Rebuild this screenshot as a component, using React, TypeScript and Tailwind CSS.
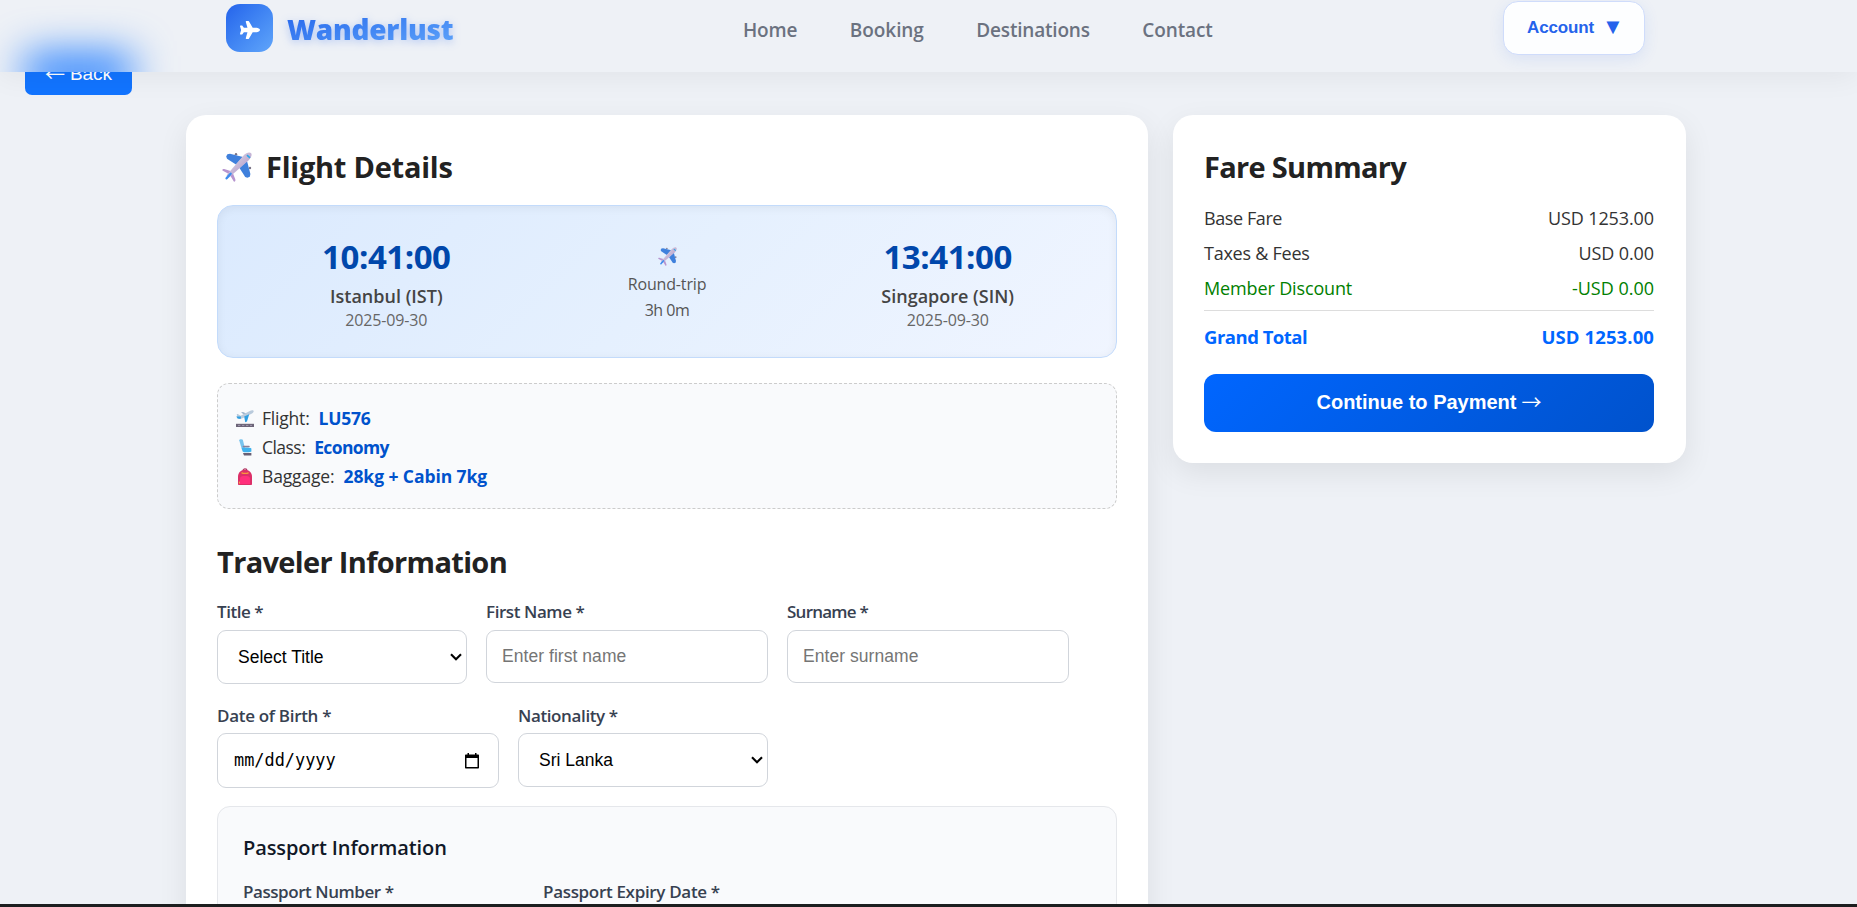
import type { ReactNode } from "react";
import { FaPlane } from "react-icons/fa";

function Airplane({ className }: { className: string }) {
  return (
    <svg viewBox="0 0 30 30" className={className} aria-hidden="true">
      <defs>
        <linearGradient id="fuselage" x1="0" y1="0" x2="1" y2="1">
          <stop offset="0.35" stopColor="#d0c5dc" />
          <stop offset="0.7" stopColor="#b9a3cf" />
        </linearGradient>
      </defs>
      <circle cx="14" cy="2.2" r="1.2" fill="#7a7386" />
      <circle cx="28" cy="16" r="1.2" fill="#7a7386" />
      <path d="M4.2 4.6 5.4 2.2 8 1.8 21 5 14 12.5 5 6.8Z" fill="#3f80dc" />
      <path d="M25.4 25.8 27.8 24.8 28.4 22 25 9 17.5 16 23.2 25Z" fill="#3f80dc" />
      <path d="M.4 18.4C.2 17 1.6 16.7 3 17.2L8.5 19 11 21.5 13.3 27.2C13.7 28.8 13.2 29.8 11.8 29.6L8.8 24.5 5.5 21.2Z" fill="#b795cf" />
      <path d="M5.2 22.5 21.5 3.6C24 .8 27.4-.3 29 1.1 30.4 2.7 29.2 6 26.4 8.5L7.6 24.9C5.6 26.4 3.8 24.4 5.2 22.5Z" fill="url(#fuselage)" />
      <path d="M25 3.2 28 5.8" stroke="#27a5e8" strokeWidth="1.6" />
      <path d="M4.6 26.3 8.6 21.7" stroke="#3b8df0" strokeWidth="2.4" strokeLinecap="round" />
    </svg>
  );
}

function Takeoff() {
  return (
    <svg viewBox="0 0 18 17" className="h-[17px] w-[18px]" aria-hidden="true">
      <path d="M0 13.8H18V17H0Z" fill="#6c6478" />
      <path d="M2 15.4H16" stroke="#a79fb3" strokeWidth="0.9" strokeDasharray="2.4 1.6" />
      <path d="M5 2.2 7 2 11.5 4 9 5.6Z" fill="#9db4cc" />
      <path d="M1 5.2C.4 4 1.2 3.6 2.2 4.2L4.6 5.8 13.8 1C15.6 0 17.6.1 17.7 1.2 17.7 2.4 16.6 3.2 15 4L6.5 8.2C4.4 9.2 1.6 9 .8 7.6Z" fill="#b9cadc" />
      <path d="M.4 6.4 5 6.6 4.6 9 1.6 8.6Z" fill="#2f9fe2" />
      <path d="M8.2 6.4 13.2 4.2 11 11.6 9.2 12.2Z" fill="#2f9fe2" />
    </svg>
  );
}

function Seat() {
  return (
    <svg viewBox="0 0 18 17" className="h-[17px] w-[18px]" aria-hidden="true">
      <path d="M3.2 1.2C3 .2 6.4-.2 6.8.8L9 9.5 6.2 11.5Z" fill="#79c4ee" />
      <path d="M5.8 9.2C5.8 8.4 14.4 8.4 15.4 9.4V12.4C15.4 13.4 7 13.6 6.6 12.4Z" fill="#3fb2ee" />
      <path d="M7.4 7.4H13" stroke="#8b8199" strokeWidth="1.5" strokeLinecap="round" />
      <path d="M7 14H15.4V16.6H8Z" fill="#695f74" />
    </svg>
  );
}

function Backpack() {
  return (
    <svg viewBox="0 0 18 17" className="h-[17px] w-[18px]" aria-hidden="true">
      <path d="M7 2.6C7 .4 11 .4 11 2.6" fill="none" stroke="#b0305f" strokeWidth="1.2" />
      <path d="M2 16V8.5C2 5 4.8 1.8 9 1.8S16 5 16 8.5V16C16 16.6 15.6 17 15 17H3C2.4 17 2 16.6 2 16Z" fill="#dc2f68" />
      <path d="M4 10.5C4 8.6 6 8 9 8S14 8.6 14 10.5V16H4Z" fill="#ff2f7c" />
      <path d="M5.5 4.6 7 5.4H11.2L12.6 4.6" fill="none" stroke="#f9963b" strokeWidth="1.3" />
      <path d="M3.4 13.6V15.6" stroke="#f9b23b" strokeWidth="1" />
    </svg>
  );
}

function Chevron() {
  return (
    <svg viewBox="0 0 12 8" className="h-[8px] w-[12px] shrink-0" aria-hidden="true">
      <path d="M1 1.2 6 6.2 11 1.2" fill="none" stroke="#000" strokeWidth="2.1" />
    </svg>
  );
}

function Calendar() {
  return (
    <svg viewBox="0 0 14 16" className="h-[16px] w-[14px] shrink-0" aria-hidden="true">
      <path d="M2.5 0H4V1.5H10V0H11.5V1.5H13C13.6 1.5 14 1.9 14 2.5V14.5C14 15.1 13.6 15.5 13 15.5H1C.4 15.5 0 15.1 0 14.5V2.5C0 1.9.4 1.5 1 1.5H2.5ZM1.5 5V14H12.5V5Z" fill="#000" fillRule="evenodd" />
    </svg>
  );
}

function Field({ label, tracking, width, gap, children }: { label: string; tracking: string; width: string; gap: string; children?: ReactNode }) {
  return (
    <div className={`flex flex-col ${width} ${gap}`}>
      <label className={`text-[17px] leading-6 font-semibold whitespace-nowrap text-[#374151] ${tracking}`}>{label}</label>
      {children}
    </div>
  );
}

const box = "flex items-center rounded-[9px] border border-[#d1d5db] bg-white font-['Liberation_Sans',sans-serif] text-[17.5px]";

function Endpoint({ time, place, date }: { time: string; place: string; date: string }) {
  return (
    <div className="flex flex-1 flex-col items-center pt-px">
      <div className="text-[33px] leading-[44px] font-bold tracking-[-0.45px] text-[#0047ab]">{time}</div>
      <div className="mt-[4px] text-[18px] leading-[26px] font-semibold text-[#444]">{place}</div>
      <div className="text-[16px] leading-[22px] tracking-[-0.15px] text-[#666]">{date}</div>
    </div>
  );
}

function InfoRow({ icon, label, labelTracking, value, valueTracking }: { icon: ReactNode; label: string; labelTracking: string; value: string; valueTracking: string }) {
  return (
    <div className="flex h-[29px] items-center text-[17.5px] leading-[29px]">
      {icon}
      <span className={`ml-[8px] text-[#333] ${labelTracking}`}>{label}</span>
      <span className={`ml-[9px] font-bold text-[#0052cc] ${valueTracking}`}>{value}</span>
    </div>
  );
}

export default function App() {
  return (
    <div className="relative flex h-screen flex-col overflow-hidden bg-[#eef1f6] font-['Open_Sans',sans-serif]">
      <header className="absolute inset-x-0 top-0 z-10 h-[72px] overflow-hidden bg-[#eef1f6] shadow-[0_4px_30px_rgba(0,0,0,0.06)]">
        <div className="absolute top-[54px] left-[25px] h-[36px] w-[107px] bg-[#1274ff]/95 blur-[20px]" />
        <div className="relative flex h-[56px] items-center pr-[212px] pl-[226px]">
          <div className="flex w-[517px] items-center gap-[14px]">
            <div className="flex h-[48px] w-[47px] items-center justify-center rounded-[14px] bg-linear-to-br from-[#2563eb] to-[#60a5fa]">
              <FaPlane className="mt-[3px] h-[18px] w-[20px] text-white" />
            </div>
            <span className="bg-linear-to-br from-[#2563eb] to-[#60a5fa] bg-clip-text pt-px text-[28px] leading-[40px] font-extrabold tracking-[-0.25px] text-transparent drop-shadow-[0_2px_4px_rgba(37,99,235,0.3)]">Wanderlust</span>
          </div>
          <nav className="flex gap-[52.5px] pt-[5px] text-[19px] leading-[27px] font-semibold text-[#6b7280]">
            <a className="tracking-[-0.16px]">Home</a>
            <a className="tracking-[-0.07px]">Booking</a>
            <a className="tracking-[-0.19px]">Destinations</a>
            <a className="tracking-[-0.13px]">Contact</a>
          </nav>
          <button className="mt-[-1px] ml-auto flex h-[54px] w-[142px] items-center gap-[8px] rounded-[15px] border border-[#cfdcfb] bg-[#fdfeff] pl-[23px] font-['Liberation_Sans',sans-serif] text-[17px] font-bold text-[#2563eb] shadow-[0_4px_15px_rgba(37,99,235,0.1)]">
            <span className="tracking-[-0.15px]">Account</span>
            <span className="pb-[3px] text-[22px] leading-[21px]">▼</span>
          </button>
        </div>
      </header>

      <main className="flex min-h-0 flex-1 flex-col overflow-hidden pt-[54px]">
        <button className="ml-[25px] flex h-[41px] w-[107px] shrink-0 items-center justify-center gap-[5px] rounded-[7px] bg-[#1274ff] pb-[2px] font-['Liberation_Sans',sans-serif] text-[19px] leading-[22px] text-white">
          <span className="font-['Noto_Sans_CJK_JP',sans-serif] text-[20px] leading-[22px]">←</span>
          <span>Back</span>
        </button>

        <div className="mt-[20px] ml-[186px] grid w-[1500px] shrink-0 grid-cols-[962px_513px] items-start gap-[25px]">
          <section className="flex h-[1400px] flex-col rounded-[20px] bg-white p-[31px] shadow-[0_10px_30px_rgba(0,0,0,0.08)]">
            <h2 className="flex h-[41px] items-center gap-[14px] pl-[5px] text-[29px] leading-[41px] font-bold tracking-[-0.24px] text-[#222]">
              <Airplane className="h-[30px] w-[30px]" />
              Flight Details
            </h2>

            <div className="mt-[18px] flex h-[153px] shrink-0 items-start rounded-[16px] border border-[#c3dbfb] bg-[linear-gradient(135deg,#dbeafe,#e5f0fe_50%,#f0f5ff)] px-[28px] pt-[28px] shadow-[inset_0_2px_10px_rgba(0,0,0,0.06)]">
              <Endpoint time="10:41:00" place="Istanbul (IST)" date="2025-09-30" />
              <div className="flex flex-1 flex-col items-center pt-[13px] text-[16px] leading-[26px] text-[#555]">
                <Airplane className="mb-[5px] h-[19px] w-[19px]" />
                <span className="tracking-[-0.15px]">Round-trip</span>
                <span className="tracking-[-0.5px]">3h 0m</span>
              </div>
              <Endpoint time="13:41:00" place="Singapore (SIN)" date="2025-09-30" />
            </div>

            <div className="mt-[25px] h-[126px] shrink-0 rounded-[12px] border border-dashed border-[#ccc] bg-[#f9fafc] pt-[20px] pl-[18px]">
              <InfoRow icon={<Takeoff />} label="Flight:" labelTracking="tracking-[-0.2px]" value="LU576" valueTracking="tracking-[-0.23px]" />
              <InfoRow icon={<Seat />} label="Class:" labelTracking="tracking-[-0.54px]" value="Economy" valueTracking="tracking-[-0.64px]" />
              <InfoRow icon={<Backpack />} label="Baggage:" labelTracking="tracking-[-0.15px]" value="28kg + Cabin 7kg" valueTracking="tracking-[-0.07px]" />
            </div>

            <h2 className="mt-[32px] text-[29px] leading-[41px] font-bold tracking-[-0.66px] text-[#222]">Traveler Information</h2>

            <div className="mt-[18px] flex gap-[19px]">
              <Field label="Title *" tracking="tracking-[-0.46px]" width="w-[250px]" gap="gap-[6px]">
                <div className={`${box} h-[54px] justify-between pr-[4px] pl-[20px] text-black`}>
                  <span>Select Title</span>
                  <Chevron />
                </div>
              </Field>
              <Field label="First Name *" tracking="tracking-[-0.42px]" width="w-[282px]" gap="gap-[6px]">
                <input className={`${box} h-[53px] pb-[1px] pl-[15px] tracking-[0.05px] placeholder:text-[#757575]`} placeholder="Enter first name" />
              </Field>
              <Field label="Surname *" tracking="tracking-[-0.76px]" width="w-[282px]" gap="gap-[6px]">
                <input className={`${box} h-[53px] pb-[1px] pl-[15px] tracking-[0.05px] placeholder:text-[#757575]`} placeholder="Enter surname" />
              </Field>
            </div>

            <div className="mt-[20px] flex gap-[19px]">
              <Field label="Date of Birth *" tracking="tracking-[-0.3px]" width="w-[282px]" gap="gap-[5px]">
                <div className={`${box} h-[55px] justify-between pr-[19px] pl-[16px] text-black`}>
                  <span className="font-['DejaVu_Sans_Mono',monospace] text-[16.9px]">mm/dd/yyyy</span>
                  <Calendar />
                </div>
              </Field>
              <Field label="Nationality *" tracking="tracking-[-0.38px]" width="w-[250px]" gap="gap-[5px]">
                <div className={`${box} h-[54px] justify-between pr-[4px] pl-[20px] text-black`}>
                  <span>Sri Lanka</span>
                  <Chevron />
                </div>
              </Field>
            </div>

            <div className="mt-[18px] h-[300px] shrink-0 rounded-[13px] border border-[#e5e7eb] bg-[#f9fafc] px-[25px] pt-[27px]">
              <h3 className="text-[20px] leading-[28px] font-semibold tracking-[-0.1px] text-[#111827]">Passport Information</h3>
              <div className="mt-[18px] flex gap-[19px]">
                <Field label="Passport Number *" tracking="tracking-[-0.44px]" width="w-[281px]" gap="gap-[7px]" />
                <Field label="Passport Expiry Date *" tracking="tracking-[-0.32px]" width="w-[282px]" gap="gap-[7px]" />
              </div>
            </div>
          </section>

          <aside className="flex flex-col rounded-[20px] bg-white p-[31px] pr-[32px] shadow-[0_10px_30px_rgba(0,0,0,0.08)]">
            <h2 className="mb-[14px] text-[29px] leading-[41px] font-bold tracking-[-0.7px] text-[#222]">Fare Summary</h2>
            <div className="flex justify-between text-[18px] leading-[35px] text-[#333]">
              <span className="tracking-[-0.41px]">Base Fare</span>
              <span className="tracking-[-0.1px]">USD 1253.00</span>
            </div>
            <div className="flex justify-between text-[18px] leading-[35px] text-[#333]">
              <span className="tracking-[-0.25px]">Taxes &amp; Fees</span>
              <span className="tracking-[-0.1px]">USD 0.00</span>
            </div>
            <div className="flex justify-between text-[18px] leading-[35px] text-[#008000]">
              <span className="tracking-[-0.14px]">Member Discount</span>
              <span>-USD 0.00</span>
            </div>
            <div className="mt-[4px] flex justify-between border-t border-[#ddd] pt-[12px] text-[18.5px] leading-[27px] font-bold text-[#0066ff]">
              <span className="tracking-[-0.5px]">Grand Total</span>
              <span className="tracking-[0.1px]">USD 1253.00</span>
            </div>
            <button className="mt-[24px] flex h-[58px] items-center justify-center gap-[5px] rounded-[12px] bg-[linear-gradient(135deg,#0066ff,#0052cc)] pb-[2px] font-['Liberation_Sans',sans-serif] text-[20px] leading-[24px] font-bold text-white">
              <span>Continue to Payment</span>
              <span className="font-['Noto_Sans_CJK_JP',sans-serif] text-[20px] leading-[24px] font-normal">→</span>
            </button>
          </aside>
        </div>
      </main>
      <div className="z-20 h-[3px] shrink-0 bg-[#1c1e1f]" />
    </div>
  );
}
